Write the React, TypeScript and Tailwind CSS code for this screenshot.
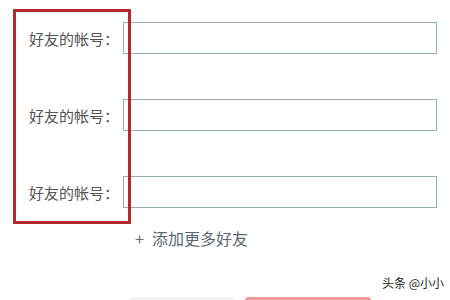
import React from 'react';

const cjk = { fontFamily: '"Noto Sans CJK SC", "Noto Sans", sans-serif' };

function AccountRow() {
  return (
    <div className="flex items-center h-[32px]">
      <label className="w-[123px] shrink-0 pr-[4px] text-right text-[15px] leading-none text-[#555555]">
        好友的帐号：
      </label>
      <input
        type="text"
        className="w-[314px] h-[32px] border border-[#93b0b0] bg-white outline-none"
      />
    </div>
  );
}

export default function App() {
  return (
    <div className="relative w-[450px] h-[300px] overflow-hidden bg-white" style={cjk}>
      <div className="flex flex-col gap-[45px] pt-[22px]">
        <AccountRow />
        <AccountRow />
        <AccountRow />
      </div>

      <div className="mt-[19px] pl-[135px] h-[22px] flex items-center text-[16px] text-[#5b6673]">
        <span className="text-[#4f6f8f] mr-[8px]">+</span>
        添加更多好友
      </div>

      <div className="mt-[48px] flex items-start">
        <div className="ml-[130px] w-[105px] h-[30px] rounded-t-[3px] bg-[#f3f3f3]" />
        <div className="ml-[10px] w-[126px] h-[30px] rounded-t-[3px] bg-[#ee9a9a]" />
      </div>

      {/* annotation box */}
      <div className="absolute left-[13px] top-[9px] w-[118px] h-[215px] border-[3px] border-[#b3282d] pointer-events-none" />

      {/* watermark */}
      <div className="absolute left-[382px] top-[277px] text-[12px] leading-none text-[#222222]">
        头条 @小小
      </div>
    </div>
  );
}
